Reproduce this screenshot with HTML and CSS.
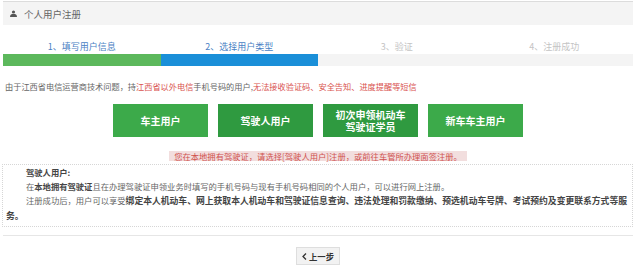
FILE: index.html
```html
<!DOCTYPE html>
<html lang="zh-CN">
<head>
    <meta charset="UTF-8">
    <meta name="viewport" content="width=device-width, initial-scale=1.0">
    <title>个人用户注册</title>
    <link rel="stylesheet" href="styles.css">
</head>
<body>
    <div class="page">
        <div class="panel-head">
            <svg class="user-icon" width="7" height="7" viewBox="0 0 14 14">
                <circle cx="7" cy="4" r="3.2" fill="#555"/>
                <path d="M0 14 C0 9 3 8 7 8 C11 8 14 9 14 14 Z" fill="#555"/>
            </svg>
            <span>个人用户注册</span>
        </div>

        <div class="steps">
            <div class="step done">
                <div class="step-label">1、填写用户信息</div>
                <div class="step-bar"></div>
            </div>
            <div class="step current">
                <div class="step-label">2、选择用户类型</div>
                <div class="step-bar"></div>
            </div>
            <div class="step">
                <div class="step-label">3、验证</div>
                <div class="step-bar"></div>
            </div>
            <div class="step">
                <div class="step-label">4、注册成功</div>
                <div class="step-bar"></div>
            </div>
        </div>

        <p class="notice">由于江西省电信运营商技术问题，持<span class="red">江西省以外电信</span>手机号码的用户,<span class="red">无法接收验证码、安全告知、进度提醒等短信</span></p>

        <div class="types">
            <button class="type-btn">车主用户</button>
            <button class="type-btn active">驾驶人用户</button>
            <button class="type-btn active two-line">初次申领机动车<br>驾驶证学员</button>
            <button class="type-btn">新车车主用户</button>
        </div>

        <div class="alert-row">
            <div class="alert">您在本地拥有驾驶证，请选择[驾驶人用户]注册，或前往车管所办理面签注册。</div>
        </div>

        <div class="desc">
            <p><b>驾驶人用户:</b></p>
            <p>在<b>本地拥有驾驶证</b>且在办理驾驶证申领业务时填写的手机号码与现有手机号码相同的个人用户，可以进行网上注册。</p>
            <p>注册成功后，用户可以享受<b class="big">绑定本人机动车、网上获取本人机动车和驾驶证信息查询、违法处理和罚款缴纳、预选机动车号牌、考试预约及变更联系方式等服务。</b></p>
        </div>

        <div class="foot">
            <button class="back-btn">
                <svg width="5" height="7" viewBox="0 0 5 7"><path d="M4 0.5 L1 3.5 L4 6.5" fill="none" stroke="#333" stroke-width="1.3"/></svg>
                上一步
            </button>
        </div>
    </div>
</body>
</html>
```

FILE: styles.css
```css
body {
    margin: 0;
    font-family: "Noto Sans CJK SC", "Noto Sans", sans-serif;
    background-color: #fff;
    color: #666;
}
.page {
    width: 630px;
    margin-left: 3px;
    padding-top: 1px;
}
.panel-head {
    height: 23px;
    display: flex;
    align-items: center;
    gap: 7px;
    padding-left: 7px;
    background-color: #f4f4f4;
    border-top: 1px solid #dcdcdc;
    font-size: 9.5px;
    color: #666;
}
.steps {
    display: flex;
    margin-top: 15px;
}
.step {
    flex: 1;
}
.step-label {
    height: 14px;
    line-height: 14px;
    text-align: center;
    font-size: 9px;
    color: #c4c4c4;
}
.step-bar {
    height: 12px;
    background-color: #f4f4f4;
}
.step.done .step-label,
.step.current .step-label {
    color: #4a7fc4;
}
.step.done .step-bar {
    background-color: #5cb85c;
}
.step.current .step-bar {
    background-color: #1a8fd8;
}
.notice {
    margin: 14px 0 0 2px;
    line-height: 12px;
    font-size: 8.2px;
    color: #666;
}
.notice .red {
    color: #d9534f;
}
.types {
    display: flex;
    justify-content: center;
    gap: 10px;
    margin-top: 12px;
}
.type-btn {
    width: 95px;
    height: 33px;
    border: none;
    padding: 0;
    background-color: #3caa4a;
    color: #fff;
    font-family: inherit;
    font-size: 10px;
    font-weight: bold;
    line-height: 12px;
}
.type-btn.active {
    background-color: #2f9a40;
}
.alert-row {
    display: flex;
    justify-content: center;
    margin-top: 14px;
}
.alert {
    height: 10px;
    line-height: 10px;
    padding: 0 5px;
    background-color: #f2dede;
    color: #d0514e;
    font-size: 8.3px;
}
.desc {
    margin-top: 3px;
    margin-left: -1px;
    padding: 0 3px 3px 3px;
    border: 1px dotted #d6d6d6;
    font-size: 8.3px;
    line-height: 14px;
    color: #666;
}
.desc p {
    margin: 0;
    text-indent: 20px;
}
.desc b {
    color: #444;
}
.desc b.big {
    font-size: 8.8px;
}
.foot {
    margin-top: 8px;
    border-top: 1px solid #e6e6e6;
    display: flex;
    justify-content: center;
    padding-top: 11px;
}
.back-btn {
    height: 18px;
    width: 44px;
    display: flex;
    align-items: center;
    justify-content: center;
    gap: 2px;
    padding: 0;
    background-color: #f2f2f2;
    border: 1px solid #dedede;
    font-family: inherit;
    font-size: 8.3px;
    font-weight: bold;
    color: #333;
}
```
